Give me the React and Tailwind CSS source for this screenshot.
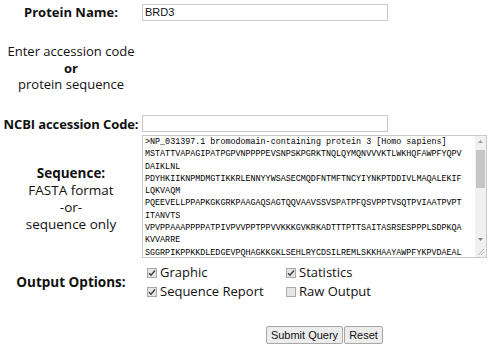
const seqLines = [
  ">NP_031397.1 bromodomain-containing protein 3 [Homo sapiens]",
  "MSTATTVAPAGIPATPGPVNPPPPEVSNPSKPGRKTNQLQYMQNVVVKTLWKHQFAWPFYQPV",
  "DAIKLNL",
  "PDYHKIIKNPMDMGTIKKRLENNYYWSASECMQDFNTMFTNCYIYNKPTDDIVLMAQALEKIF",
  "LQKVAQM",
  "PQEEVELLPPAPKGKGRKPAAGAQSAGTQQVAAVSSVSPATPFQSVPPTVSQTPVIAATPVPT",
  "ITANVTS",
  "VPVPPAAAPPPPATPIVPVVPPTPPVVKKKGVKRKADTTTPTTSAITASRSESPPPLSDPKQA",
  "KVVARRE",
  "SGGRPIKPPKKDLEDGEVPQHAGKKGKLSEHLRYCDSILREMLSKKHAAYAWPFYKPVDAEAL",
];

const Check = ({ checked, label }) => (
  <label className="flex items-center gap-[3px] h-[20px]">
    <span className="w-[10px] h-[10px] border border-[#a9a9a9] bg-[#e6e6e6] flex items-center justify-center">
      {checked && (
        <svg width="8" height="8" viewBox="0 0 8 8">
          <path d="M1 4.2 L3 6.2 L7 1.5" stroke="#444" strokeWidth="1.5" fill="none" />
        </svg>
      )}
    </span>
    <span>{label}</span>
  </label>
);

const App = () => {
  return (
    <div className="w-[499px] h-[350px] bg-white text-[#111] font-['Open_Sans',sans-serif] text-[13px] overflow-hidden whitespace-nowrap">
      <div className="grid grid-cols-[142px_345px]">
        {/* protein name */}
        <div className="h-[24px] flex items-center justify-center font-bold pt-[2px]">Protein Name:</div>
        <div className="h-[24px] pt-[4px]">
          <div className="w-[246px] h-[17px] border border-[#c9c9c9] pl-[2px] text-[11px] leading-[15px] font-['Liberation_Sans',sans-serif]">
            BRD3
          </div>
        </div>

        {/* hint */}
        <div className="h-[90px] pt-[19px] text-center leading-[16.5px] text-[13px]">
          <div>Enter accession code</div>
          <div className="font-bold">or</div>
          <div>protein sequence</div>
        </div>
        <div className="h-[90px]"></div>

        {/* ncbi */}
        <div className="h-[21px] flex items-center justify-center font-bold tracking-[-0.1px]">NCBI accession Code:</div>
        <div className="h-[21px] pt-[1px]">
          <div className="w-[246px] h-[17px] border border-[#c9c9c9]"></div>
        </div>

        {/* sequence */}
        <div className="h-[124px] flex flex-col items-center justify-center leading-[17px] pt-[3px] text-[13.5px]">
          <div className="font-bold">Sequence:</div>
          <div>FASTA format</div>
          <div>-or-</div>
          <div>sequence only</div>
        </div>
        <div className="h-[124px]">
          <div className="w-[345px] h-[123px] border border-[#c9c9c9] flex">
            <div className="flex-1 pl-[2px] font-['Liberation_Mono',monospace] text-[8.4px] leading-[12.3px] text-black whitespace-pre overflow-hidden">
              {seqLines.join("\n")}
            </div>
            <div className="w-[11px] bg-[#f0f0f0] flex flex-col">
              <div className="h-[11px] flex items-center justify-center">
                <svg width="5" height="3" viewBox="0 0 5 3"><path d="M0 3 L2.5 0 L5 3Z" fill="#a0a0a0" /></svg>
              </div>
              <div className="mt-[3px] h-[38px] mx-[1px] bg-[#c6c6c6]"></div>
              <div className="flex-1"></div>
              <div className="h-[11px] flex items-center justify-center">
                <svg width="5" height="3" viewBox="0 0 5 3"><path d="M0 0 L2.5 3 L5 0Z" fill="#808080" /></svg>
              </div>
              <div className="h-[12px] flex items-end justify-end pr-[1px] pb-[1px]">
                <svg width="8" height="8" viewBox="0 0 8 8">
                  <path d="M7 1 L1 7 M7 4 L4 7" stroke="#b5b5b5" strokeWidth="1" />
                </svg>
              </div>
            </div>
          </div>
        </div>

        {/* options */}
        <div className="h-[46px] flex items-center justify-center font-bold text-[13.5px]">Output Options:</div>
        <div className="h-[46px] pt-[4px] pl-[5px] grid grid-cols-[139px_1fr] auto-rows-[19px] text-[13px]">
          <Check checked label="Graphic" />
          <Check checked label="Statistics" />
          <Check checked label="Sequence Report" />
          <Check label="Raw Output" />
        </div>
      </div>

      <div className="mt-[21px] ml-[266px] flex font-['Liberation_Sans',sans-serif] text-[11px]">
        <button className="h-[18px] w-[77px] border border-[#a8a8a8] bg-[#ececec] rounded-[2px]">Submit Query</button>
        <button className="h-[18px] w-[39px] ml-[1px] border border-[#a8a8a8] bg-[#ececec] rounded-[2px]">Reset</button>
      </div>
    </div>
  );
};

export default App;
